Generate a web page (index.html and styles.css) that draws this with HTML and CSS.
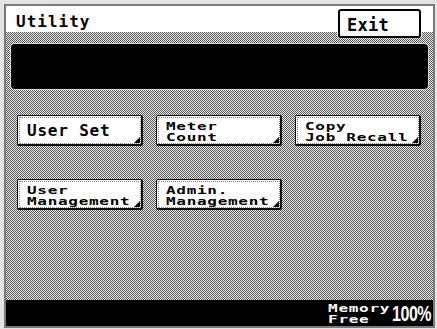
FILE: index.html
```html
<!DOCTYPE html>
<html>
<head>
<meta charset="utf-8">
<link rel="stylesheet" href="styles.css">
</head>
<body>
<div class="frame">
  <div class="header">
    <span class="title">Utility</span>
    <div class="exit"><span>Exit</span></div>
  </div>
  <div class="pattern">
    <div class="message"></div>
    <div class="grid">
      <div class="btn"><span class="one">User Set</span></div>
      <div class="btn"><span class="two">Meter<br>Count</span></div>
      <div class="btn"><span class="two">Copy<br>Job Recall</span></div>
      <div class="btn"><span class="two">User<br>Management</span></div>
      <div class="btn"><span class="two">Admin.<br>Management</span></div>
    </div>
  </div>
  <div class="footer">
    <span class="mem">Memory<br>Free</span>
    <span class="pct">100%</span>
  </div>
</div>
</body>
</html>
```

FILE: styles.css
```css
html, body {
  margin: 0;
  padding: 0;
  background: #e4e4e4;
}
body {
  width: 437px;
  height: 329px;
  overflow: hidden;
}
.frame {
  margin: 4px 0 0 4px;
  width: 431px;
  height: 324px;
  box-sizing: border-box;
  border: 2px solid #7a7a7a;
  display: flex;
  flex-direction: column;
  font-family: "DejaVu Sans Mono", monospace;
  font-weight: bold;
}
.header {
  height: 26px;
  flex: none;
  background: #fff;
  display: flex;
  justify-content: space-between;
  align-items: flex-start;
  padding-left: 10px;
}
.title {
  font-size: 16px;
  letter-spacing: 1px;
  line-height: 20px;
  padding-top: 6px;
  color: #000;
}
.exit {
  position: relative;
  z-index: 1;
  margin-top: 3px;
  margin-right: 12px;
  width: 83px;
  height: 29px;
  box-sizing: border-box;
  background: #fff;
  border: 2px solid #000;
  border-radius: 3px;
  outline: 1px dotted #fff;
  display: flex;
  align-items: center;
  padding-left: 7px;
  padding-top: 2px;
  font-size: 17px;
  letter-spacing: 0.3px;
}
.pattern {
  flex: 1;
  background-color: #8c8c8c;
  background-image: repeating-conic-gradient(#eeeeee 0 25%, #555555 0 50%);
  background-size: 2px 2px;
  padding-top: 12px;
  display: flex;
  flex-direction: column;
}
.message {
  margin: 0 5px;
  height: 45px;
  background: #000;
  border-radius: 4px;
  box-shadow: 0 0 0 1px rgba(255,255,255,0.6);
}
.grid {
  margin-top: 26px;
  padding-left: 11px;
  display: grid;
  grid-template-columns: repeat(3, 126px);
  column-gap: 13px;
  row-gap: 33px;
}
.btn {
  position: relative;
  height: 31px;
  box-sizing: border-box;
  background: #fff;
  border: 1px solid #111;
  border-right-width: 2px;
  border-bottom-width: 2px;
  border-radius: 2px;
  outline: 1px dotted #888;
  outline-offset: -3px;
  display: flex;
  align-items: center;
  padding-left: 9px;
  color: #000;
}
.btn::after {
  content: "";
  position: absolute;
  right: 1px;
  bottom: 1px;
  width: 0;
  height: 0;
  border-left: 6px solid transparent;
  border-bottom: 6px solid #000;
}
.one {
  font-size: 16px;
  letter-spacing: 0.8px;
  line-height: 16px;
  padding-top: 1px;
}
.two {
  font-size: 16px;
  letter-spacing: 0.7px;
  line-height: 19px;
  display: block;
  transform: translateY(2px) scaleY(0.62);
  transform-origin: left center;
  white-space: nowrap;
}
.footer {
  height: 26px;
  flex: none;
  background: #000;
  color: #fff;
  display: flex;
  justify-content: flex-end;
  align-items: center;
  padding-right: 2px;
}
.mem {
  font-size: 16px;
  letter-spacing: 0.7px;
  line-height: 19px;
  display: block;
  transform: scaleY(0.6);
  transform-origin: left center;
  margin-top: 1px;
}
.pct {
  font-family: "Liberation Sans", Arial, sans-serif;
  font-weight: bold;
  font-size: 16px;
  letter-spacing: -0.5px;
  display: block;
  transform: scaleY(1.42);
  margin-left: 2px;
  margin-top: 2px;
}
```
